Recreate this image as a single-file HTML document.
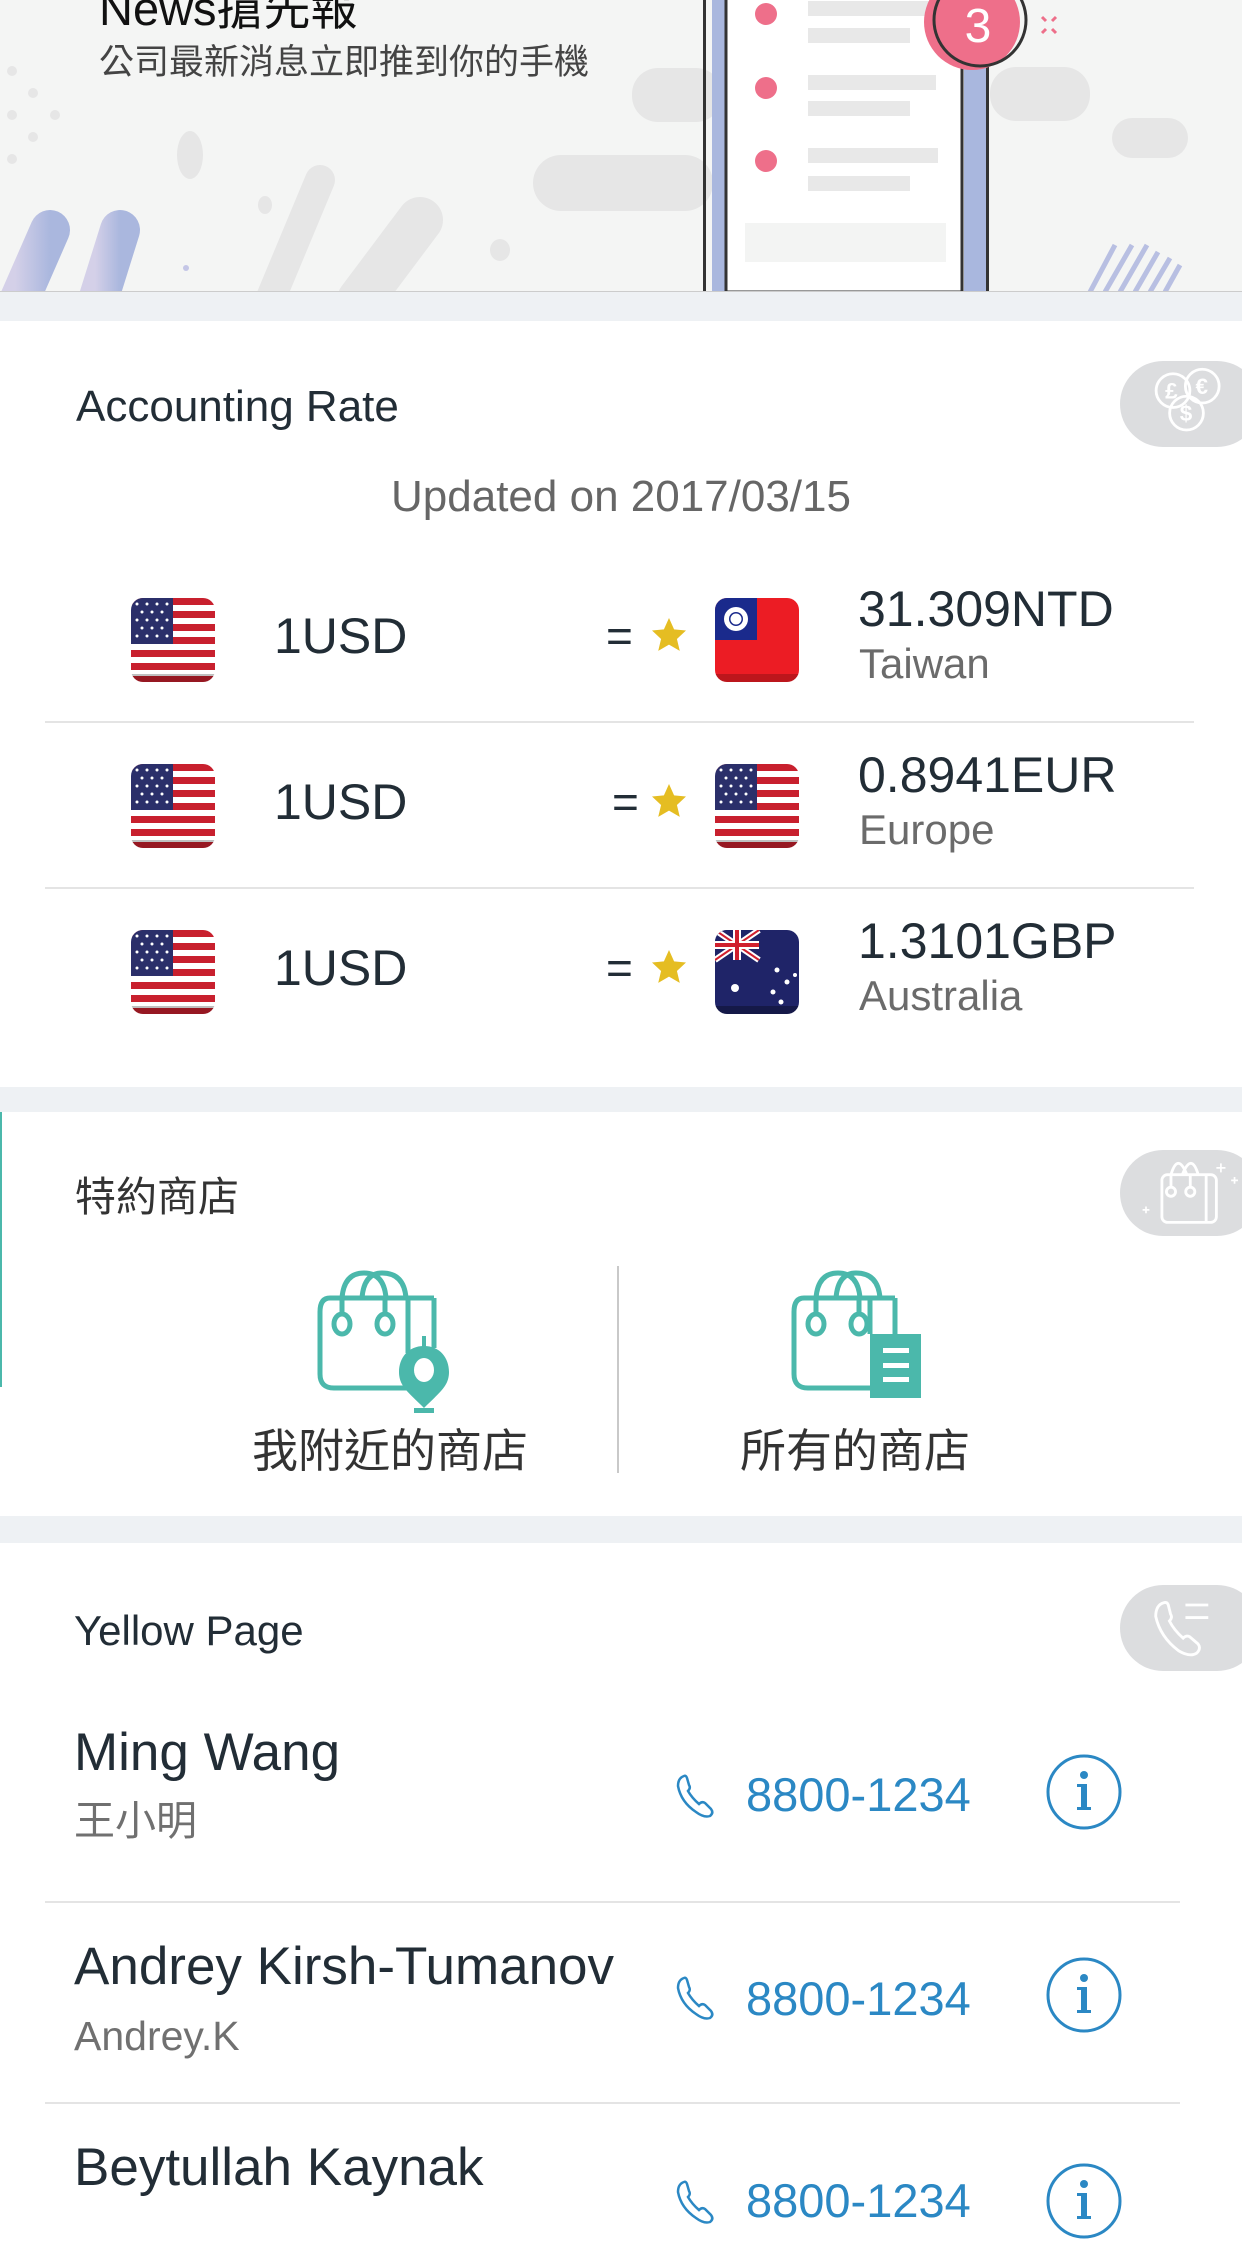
<!DOCTYPE html>
<html><head><meta charset="utf-8">
<style>
*{margin:0;padding:0;box-sizing:border-box}
body{width:1242px;height:2208px;overflow:hidden;background:#eef1f4;font-family:"Liberation Sans","Noto Sans CJK TC",sans-serif;position:relative}
.a{position:absolute;white-space:nowrap}
.card{position:absolute;left:0;width:1242px;background:#fff}
.t{color:#222d36}
.badge{position:absolute;left:1120px;width:140px;height:86px;border-radius:43px;background:#dcdddf}
.sep{position:absolute;height:2px;background:#e4e4e4}
.usd{font-size:50px;color:#222d36;line-height:50px}
.val{font-size:50px;color:#222d36;line-height:50px}
.cty{font-size:42px;color:#6b6b6b;line-height:44px}
.nm{font-size:53px;color:#222d36;line-height:54px;left:74px}
.sub{font-size:41px;color:#707070;line-height:44px;left:74px}
.ph{font-size:47px;color:#2b88c4;line-height:48px;left:746px}
</style></head><body>

<!-- banner -->
<div class="card" style="top:0;height:292px;background:#f4f5f4;overflow:hidden">
<svg width="1242" height="292" style="position:absolute;left:0;top:0">
<defs><linearGradient id="pg" x1="0" x2="1"><stop offset="0" stop-color="#d4d0e8"/><stop offset="1" stop-color="#aab7de"/></linearGradient></defs>
<rect x="632" y="68" width="90" height="54" rx="26" fill="#e6e6e6"/>
<rect x="533" y="155" width="180" height="56" rx="28" fill="#e6e6e6"/>
<rect x="990" y="67" width="100" height="54" rx="26" fill="#e6e6e6"/>
<rect x="1112" y="118" width="76" height="40" rx="20" fill="#e6e6e6"/>
<ellipse cx="190" cy="155" rx="13" ry="24" fill="#e6e6e6"/>
<ellipse cx="265" cy="205" rx="7" ry="9" fill="#e6e6e6"/>
<ellipse cx="500" cy="250" rx="10" ry="11" fill="#e6e6e6"/>
<g fill="#e6e6e6"><circle cx="12" cy="71" r="5"/><circle cx="33" cy="93" r="5"/><circle cx="12" cy="115" r="5"/><circle cx="55" cy="115" r="5"/><circle cx="33" cy="137" r="5"/><circle cx="12" cy="159" r="5"/></g>
<line x1="270" y1="300" x2="320" y2="180" stroke="#e6e6e6" stroke-width="30" stroke-linecap="round"/>
<line x1="360" y1="300" x2="420" y2="220" stroke="#e6e6e6" stroke-width="46" stroke-linecap="round"/>
<line x1="15" y1="310" x2="50" y2="230" stroke="url(#pg)" stroke-width="40" stroke-linecap="round"/>
<line x1="95" y1="310" x2="120" y2="230" stroke="url(#pg)" stroke-width="40" stroke-linecap="round"/>
<circle cx="186" cy="268" r="3" fill="#c4c6e6"/>
<g stroke="#b8bfe2" stroke-width="5"><line x1="1090" y1="292" x2="1115" y2="245"/><line x1="1105" y1="292" x2="1132" y2="245"/><line x1="1120" y1="292" x2="1147" y2="245"/><line x1="1135" y1="292" x2="1158" y2="252"/><line x1="1150" y1="292" x2="1170" y2="258"/><line x1="1165" y1="292" x2="1180" y2="265"/></g>
<rect x="703" y="-10" width="3" height="302" fill="#333"/>
<rect x="712" y="-10" width="14" height="302" fill="#a9b7de"/>
<rect x="726" y="-10" width="236" height="302" fill="#fff" stroke="#333" stroke-width="3"/>
<rect x="964" y="-10" width="24" height="302" fill="#a9b7de"/>
<rect x="986" y="-10" width="3" height="302" fill="#333"/>
<g fill="#ee6f8a"><circle cx="766" cy="14" r="11"/><circle cx="766" cy="88" r="11"/><circle cx="766" cy="161" r="11"/></g>
<g fill="#e8e8e8"><rect x="808" y="1" width="130" height="15"/><rect x="808" y="28" width="102" height="15"/><rect x="808" y="75" width="128" height="15"/><rect x="808" y="101" width="102" height="15"/><rect x="808" y="148" width="130" height="15"/><rect x="808" y="176" width="102" height="15"/><rect x="745" y="223" width="201" height="39" fill="#f3f4f3"/></g>
<circle cx="972" cy="22" r="48" fill="#ee6f8a"/>
<circle cx="980" cy="20" r="46" fill="none" stroke="#333" stroke-width="3"/>
<text x="978" y="42" font-size="48" fill="#fff" text-anchor="middle" font-family="Liberation Sans">3</text>
<g stroke="#ee6f8a" stroke-width="3"><line x1="1042" y1="17" x2="1046" y2="21"/><line x1="1056" y1="17" x2="1052" y2="21"/><line x1="1042" y1="33" x2="1046" y2="29"/><line x1="1056" y1="33" x2="1052" y2="29"/></g>
</svg>
<div class="a" style="left:99px;top:-16px;font-size:47px;line-height:50px;color:#111">News搶先報</div>
<div class="a" style="left:99px;top:44px;font-size:35px;line-height:38px;color:#444">公司最新消息立即推到你的手機</div>
<div style="position:absolute;left:0;top:291px;width:1242px;height:2px;background:#ccc"></div>
</div>

<!-- Accounting -->
<div class="card" style="top:321px;height:766px">
<div class="a t" style="left:76px;top:62px;font-size:44px;line-height:48px">Accounting Rate</div>
<div class="badge" style="top:40px"></div>
<svg class="a" style="left:1146px;top:42px" width="90" height="80" viewBox="0 0 80 70" fill="none" stroke="#fff" stroke-width="2.5"><circle cx="24" cy="24" r="15"/><circle cx="50" cy="20" r="15"/><circle cx="36" cy="44" r="15"/><text x="17" y="31" font-size="20" fill="#fff" stroke="none" font-weight="bold">£</text><text x="44" y="27" font-size="20" fill="#fff" stroke="none" font-weight="bold">€</text><text x="30" y="51" font-size="20" fill="#fff" stroke="none" font-weight="bold">$</text></svg>
<div class="a" style="left:0;width:1242px;text-align:center;top:152px;font-size:44px;line-height:48px;color:#666">Updated on 2017/03/15</div>
</div>

<svg width="0" height="0" style="position:absolute">
<defs>
<clipPath id="fc"><rect width="84" height="84" rx="12"/></clipPath>
<g id="us"><g clip-path="url(#fc)"><rect width="84" height="84" fill="#fff"/><g fill="#c8202e"><rect y="0" width="84" height="7"/><rect y="13" width="84" height="7"/><rect y="26" width="84" height="7"/><rect y="39" width="84" height="7"/><rect y="52" width="84" height="7"/><rect y="65" width="84" height="7"/><rect y="78" width="84" height="7"/></g><rect width="42" height="46" fill="#2b2f6a"/><g fill="#fff"><circle cx="6" cy="6" r="1.5"/><circle cx="16" cy="6" r="1.5"/><circle cx="26" cy="6" r="1.5"/><circle cx="36" cy="6" r="1.5"/><circle cx="11" cy="14" r="1.5"/><circle cx="21" cy="14" r="1.5"/><circle cx="31" cy="14" r="1.5"/><circle cx="6" cy="22" r="1.5"/><circle cx="16" cy="22" r="1.5"/><circle cx="26" cy="22" r="1.5"/><circle cx="36" cy="22" r="1.5"/><circle cx="11" cy="30" r="1.5"/><circle cx="21" cy="30" r="1.5"/><circle cx="31" cy="30" r="1.5"/><circle cx="6" cy="38" r="1.5"/><circle cx="16" cy="38" r="1.5"/><circle cx="26" cy="38" r="1.5"/><circle cx="36" cy="38" r="1.5"/></g><rect y="76" width="84" height="8" fill="#000" opacity=".25"/></g></g>
<g id="tw"><g clip-path="url(#fc)"><rect width="84" height="84" fill="#ec1c24"/><rect width="42" height="42" fill="#1a2a8c"/><circle cx="21" cy="21" r="12" fill="#fff"/><circle cx="21" cy="21" r="7" fill="#1a2a8c"/><circle cx="21" cy="21" r="5.5" fill="#fff"/><rect y="76" width="84" height="8" fill="#000" opacity=".2"/></g></g>
<g id="au"><g clip-path="url(#fc)"><rect width="84" height="84" fill="#1f2468"/><rect width="44" height="30" fill="#1f2468"/><g stroke="#fff" stroke-width="6"><line x1="0" y1="0" x2="44" y2="30"/><line x1="44" y1="0" x2="0" y2="30"/></g><g stroke="#d0202e" stroke-width="2"><line x1="0" y1="0" x2="44" y2="30"/><line x1="44" y1="0" x2="0" y2="30"/></g><rect x="18" y="0" width="8" height="30" fill="#fff"/><rect x="0" y="11" width="44" height="8" fill="#fff"/><rect x="20" y="0" width="4" height="30" fill="#d0202e"/><rect x="0" y="13" width="44" height="4" fill="#d0202e"/><g fill="#fff"><circle cx="20" cy="58" r="4"/><circle cx="62" cy="40" r="2.5"/><circle cx="72" cy="52" r="2.5"/><circle cx="58" cy="62" r="2.5"/><circle cx="66" cy="72" r="2.5"/><circle cx="80" cy="45" r="2"/></g><rect y="76" width="84" height="8" fill="#000" opacity=".3"/></g></g>
<path id="st" d="M15 0 L19.5 10 L30 11 L22 18.5 L24.5 29 L15 23.5 L5.5 29 L8 18.5 L0 11 L10.5 10 Z" fill="#e5bd22"/>
</defs></svg>

<svg class="a" style="left:131px;top:598px" width="84" height="84"><use href="#us"/></svg>
<svg class="a" style="left:131px;top:764px" width="84" height="84"><use href="#us"/></svg>
<svg class="a" style="left:131px;top:930px" width="84" height="84"><use href="#us"/></svg>
<svg class="a" style="left:715px;top:598px" width="84" height="84"><use href="#tw"/></svg>
<svg class="a" style="left:715px;top:764px" width="84" height="84"><use href="#us"/></svg>
<svg class="a" style="left:715px;top:930px" width="84" height="84"><use href="#au"/></svg>
<div class="a usd" style="left:274px;top:611px">1USD</div>
<div class="a usd" style="left:274px;top:777px">1USD</div>
<div class="a usd" style="left:274px;top:943px">1USD</div>
<div class="a usd" style="left:606px;top:611px;font-size:46px">=</div>
<div class="a usd" style="left:612px;top:777px;font-size:46px">=</div>
<div class="a usd" style="left:606px;top:943px;font-size:46px">=</div>
<svg class="a" style="left:652px;top:618px" width="34" height="34" viewBox="0 0 30 30"><use href="#st"/></svg>
<svg class="a" style="left:652px;top:784px" width="34" height="34" viewBox="0 0 30 30"><use href="#st"/></svg>
<svg class="a" style="left:652px;top:950px" width="34" height="34" viewBox="0 0 30 30"><use href="#st"/></svg>
<div class="a val" style="left:858px;top:584px">31.309NTD</div>
<div class="a cty" style="left:859px;top:642px">Taiwan</div>
<div class="a val" style="left:858px;top:750px">0.8941EUR</div>
<div class="a cty" style="left:859px;top:808px">Europe</div>
<div class="a val" style="left:858px;top:916px">1.3101GBP</div>
<div class="a cty" style="left:859px;top:974px">Australia</div>
<div class="sep" style="left:45px;width:1149px;top:721px"></div>
<div class="sep" style="left:45px;width:1149px;top:887px"></div>

<!-- shops -->
<div class="card" style="top:1112px;height:404px">
<div style="position:absolute;left:0;top:0;width:2px;height:275px;background:#4bb8ab"></div>
<div class="a" style="left:75px;top:63px;font-size:41px;line-height:44px;color:#333">特約商店</div>
<div class="badge" style="top:38px"></div>
<svg class="a" style="left:1136px;top:40px" width="104" height="84" viewBox="0 0 90 74" fill="none" stroke="#fff" stroke-width="2.5"><rect x="22" y="20" width="48" height="42" rx="5"/><line x1="61" y1="20" x2="61" y2="62"/><path d="M30 20 Q36 0 44 20 M40 20 Q48 0 54 20"/><line x1="30" y1="20" x2="30" y2="31"/><line x1="47" y1="20" x2="47" y2="31"/><circle cx="30" cy="35" r="4"/><circle cx="47" cy="35" r="4"/><path d="M74 10 v8 M70 14 h8 M86 22 v6 M83 25 h6 M8 48 v6 M5 51 h6" stroke-width="1.5"/></svg>
<div style="position:absolute;left:617px;top:154px;width:2px;height:207px;background:#c9c9c9"></div>
<div class="a" style="left:252px;top:313px;font-size:46px;line-height:52px;color:#333">我附近的商店</div>
<div class="a" style="left:740px;top:313px;font-size:46px;line-height:52px;color:#333">所有的商店</div>
</div>
<svg class="a" style="left:310px;top:1268px" width="150" height="150" fill="none" stroke="#4bb8ab" stroke-width="5">
<path d="M98 30 H20 Q10 30 10 44 V106 Q10 120 24 120 H98"/>
<line x1="98" y1="30" x2="124" y2="30"/><line x1="124" y1="30" x2="124" y2="80"/><line x1="98" y1="30" x2="98" y2="85"/>
<path d="M32 30 Q34 5 54 5 Q74 5 76 30 M52 30 Q54 5 72 5 Q94 5 96 30"/>
<line x1="32" y1="30" x2="32" y2="46"/><line x1="75" y1="30" x2="75" y2="46"/>
<ellipse cx="32" cy="56" rx="8" ry="10"/><ellipse cx="75" cy="56" rx="8" ry="10"/>
<path d="M114 78 C98 78 89 90 89 104 C89 118 98 124 114 140 C130 124 139 118 139 104 C139 90 130 78 114 78 Z" fill="#4bb8ab" stroke="none"/>
<ellipse cx="114" cy="102" rx="10" ry="12" fill="#fff" stroke="none"/>
<rect x="104" y="140" width="20" height="5" fill="#4bb8ab" stroke="none"/>
<rect x="112" y="68" width="4" height="12" fill="#4bb8ab" stroke="none"/>
</svg>
<svg class="a" style="left:780px;top:1268px" width="150" height="150" fill="none" stroke="#4bb8ab" stroke-width="5">
<path d="M90 30 H24 Q14 30 14 44 V106 Q14 120 28 120 H90"/>
<line x1="90" y1="30" x2="115" y2="30"/><line x1="115" y1="30" x2="115" y2="66"/><line x1="90" y1="30" x2="90" y2="66"/>
<path d="M36 30 Q38 5 58 5 Q78 5 80 30 M56 30 Q58 5 76 5 Q98 5 100 30"/>
<line x1="36" y1="30" x2="36" y2="46"/><line x1="79" y1="30" x2="79" y2="46"/>
<ellipse cx="36" cy="56" rx="8" ry="10"/><ellipse cx="79" cy="56" rx="8" ry="10"/>
<rect x="90" y="66" width="51" height="64" fill="#4bb8ab" stroke="none"/>
<g fill="#fff" stroke="none"><rect x="103" y="80" width="26" height="5"/><rect x="103" y="95" width="26" height="5"/><rect x="103" y="109" width="26" height="5"/></g>
</svg>

<!-- yellow page -->
<div class="card" style="top:1543px;height:700px">
<div class="a t" style="left:74px;top:65px;font-size:42px;line-height:46px">Yellow Page</div>
<div class="badge" style="top:42px"></div>
<svg class="a" style="left:1144px;top:46px" width="92" height="80" viewBox="0 0 80 70" fill="none" stroke="#fff" stroke-width="2.5"><path d="M17 12 Q10 14 10 24 Q14 42 30 54 Q40 60 46 56 Q50 52 47 48 L40 42 Q37 40 34 43 Q26 36 22 28 Q25 25 23 22 L21 14 Q20 11 17 12 Z"/><line x1="36" y1="14" x2="56" y2="14"/><line x1="36" y1="25" x2="56" y2="25"/></svg>
</div>
<div class="a nm" style="top:1726px">Ming Wang</div>
<div class="a sub" style="top:1799px">王小明</div>
<div class="a nm" style="top:1940px">Andrey Kirsh-Tumanov</div>
<div class="a sub" style="top:2014px">Andrey.K</div>
<div class="a nm" style="top:2141px">Beytullah Kaynak</div>
<div class="sep" style="left:45px;width:1135px;top:1901px"></div>
<div class="sep" style="left:45px;width:1135px;top:2102px"></div>

<svg width="0" height="0" style="position:absolute"><defs>
<g id="phi" fill="none" stroke="#2b88c4" stroke-width="2.5"><path d="M8 2 Q2 4 2 12 Q5 28 20 38 Q28 44 34 42 Q38 39 35 35 L29 29 Q26 27 23 30 Q16 24 12 17 Q15 14 13 11 L11 4 Q10 1 8 2 Z"/></g>
<g id="inf"><circle cx="39" cy="39" r="36" fill="none" stroke="#2b88c4" stroke-width="3"/><circle cx="39" cy="22" r="4" fill="#2b88c4"/><rect x="36" y="31" width="6" height="26" fill="#2b88c4"/><rect x="32" y="31" width="8" height="3" fill="#2b88c4"/><rect x="32" y="54" width="14" height="3" fill="#2b88c4"/></g>
</defs></svg>
<svg class="a" style="left:676px;top:1774px" width="48" height="48"><use href="#phi"/></svg>
<svg class="a" style="left:676px;top:1976px" width="48" height="48"><use href="#phi"/></svg>
<svg class="a" style="left:676px;top:2180px" width="48" height="48"><use href="#phi"/></svg>
<div class="a ph" style="top:1771px">8800-1234</div>
<div class="a ph" style="top:1975px">8800-1234</div>
<div class="a ph" style="top:2177px">8800-1234</div>
<svg class="a" style="left:1045px;top:1753px" width="80" height="80"><use href="#inf"/></svg>
<svg class="a" style="left:1045px;top:1956px" width="80" height="80"><use href="#inf"/></svg>
<svg class="a" style="left:1045px;top:2162px" width="80" height="80"><use href="#inf"/></svg>
</body></html>
